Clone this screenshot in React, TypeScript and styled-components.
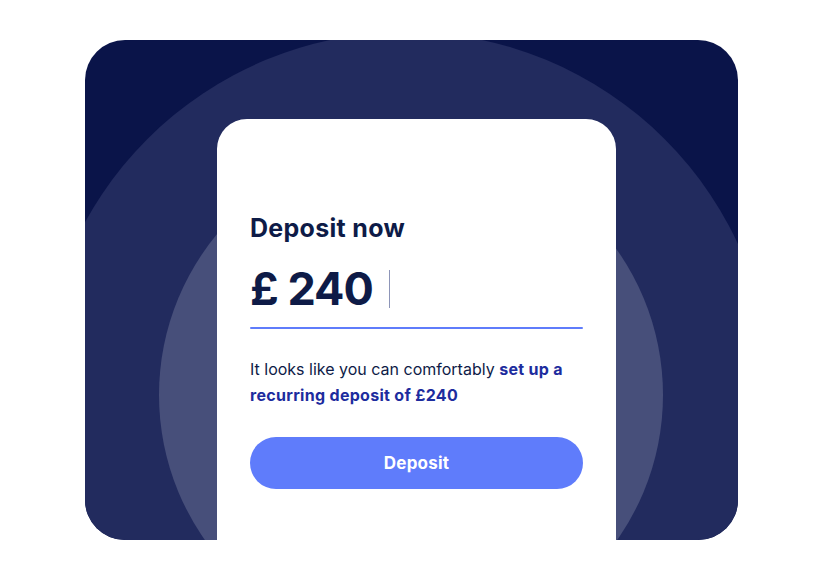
import React from "react";
import styled, { createGlobalStyle } from "styled-components";

const Global = createGlobalStyle`
  html, body { margin: 0; padding: 0; background: #ffffff; }
  body { font-family: "Inter", "Noto Sans", sans-serif; }
`;

const Page = styled.div`
  width: 823px;
  height: 580px;
  padding: 40px 0 0 85px;
  box-sizing: border-box;
`;

const Hero = styled.section`
  position: relative;
  width: 653px;
  height: 500px;
  border-radius: 40px;
  overflow: hidden;
  background: #0a1449;
  padding: 79px 0 0 132px;
  box-sizing: border-box;
`;

const Ring = styled.div<{ $cx: number; $cy: number; $r: number; $color: string }>`
  position: absolute;
  left: ${(p) => p.$cx - p.$r}px;
  top: ${(p) => p.$cy - p.$r}px;
  width: ${(p) => p.$r * 2}px;
  height: ${(p) => p.$r * 2}px;
  border-radius: 50%;
  background: ${(p) => p.$color};
`;

const Card = styled.div`
  position: relative;
  width: 399px;
  height: 460px;
  background: #ffffff;
  border-radius: 30px 30px 0 0;
  padding: 94px 33px 0 33px;
  box-sizing: border-box;
  display: flex;
  flex-direction: column;
`;

const Title = styled.h2`
  margin: 0;
  font-size: 25px;
  line-height: 30px;
  font-weight: 700;
  color: #0e1b47;
  letter-spacing: 0.3px;
`;

const AmountRow = styled.div`
  margin-top: 22px;
  display: flex;
  align-items: center;
  gap: 16px;
  height: 48px;
`;

const Amount = styled.span`
  font-size: 45px;
  line-height: 48px;
  font-weight: 700;
  color: #0e1b47;
  letter-spacing: -1px;
`;

const Caret = styled.span`
  width: 1px;
  height: 38px;
  background: #8d95b8;
`;

const Underline = styled.div`
  margin-top: 14px;
  height: 2px;
  background: #5f7cfb;
  border-radius: 1px;
`;

const Note = styled.p`
  margin: 27px 0 0 0;
  font-size: 16px;
  line-height: 26px;
  color: #0e1b47;
`;

const Highlight = styled.strong`
  color: #1d2c9e;
  font-weight: 700;
  letter-spacing: 0.3px;
`;

const Button = styled.button`
  margin-top: 29px;
  height: 52px;
  border: none;
  border-radius: 26px;
  background: #5f7cfb;
  color: #ffffff;
  font-family: inherit;
  font-size: 17px;
  font-weight: 700;
  letter-spacing: 0.2px;
  cursor: pointer;
`;

export default function App() {
  return (
    <>
      <Global />
      <Page>
        <Hero>
          <Ring $cx={321} $cy={358} $r={366} $color="#222b5e" />
          <Ring $cx={326} $cy={355} $r={252} $color="#474f7a" />
          <Card>
            <Title>Deposit now</Title>
            <AmountRow>
              <Amount>£ 240</Amount>
              <Caret />
            </AmountRow>
            <Underline />
            <Note>
              It looks like you can comfortably{" "}
              <Highlight>set up a recurring deposit of £240</Highlight>
            </Note>
            <Button>Deposit</Button>
          </Card>
        </Hero>
      </Page>
    </>
  );
}
